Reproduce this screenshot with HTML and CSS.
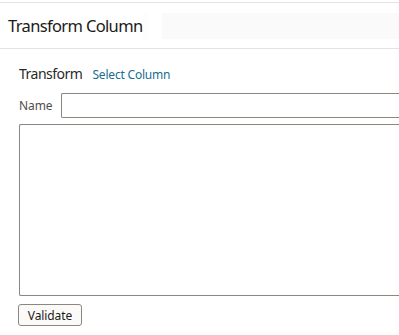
FILE: index.html
```html
<!DOCTYPE html>
<html>
<head>
<meta charset="utf-8">
<link rel="stylesheet" href="styles.css">
</head>
<body>
<div class="header">
  <h1 class="title">Transform Column</h1>
  <div class="gap"></div>
  <div class="search"></div>
</div>
<div class="content">
  <div class="section-head">
    <span class="section-title">Transform</span>
    <a class="link">Select Column</a>
  </div>
  <div class="field">
    <label class="label">Name</label>
    <div class="input"></div>
  </div>
  <div class="textarea"></div>
  <button class="btn">Validate</button>
</div>
</body>
</html>
```
FILE: styles.css
```css
html, body {
  margin: 0;
  padding: 0;
  background: #fff;
  font-family: "Noto Sans", "Open Sans", sans-serif;
  color: #161513;
  overflow: hidden;
}
.header {
  margin-top: 2px;
  border-top: 1px solid #e1e6e4;
  border-bottom: 1px solid #e3e3e1;
  height: 45px;
  display: flex;
  align-items: center;
}
.title {
  margin: 0 0 0 8px;
  width: 135px;
  font-size: 16.5px;
  letter-spacing: -0.65px;
  font-weight: 400;
  line-height: 22px;
  color: #1b1a18;
  white-space: nowrap;
}
.gap {
  width: 5px;
  height: 26px;
  background: #fdfdfd;
}
.search {
  margin-left: 14px;
  flex: 1;
  height: 26px;
  background: #fafafa;
  margin-top: 1px;
}
.content {
  padding: 15px 0 0 19px;
}
.section-head {
  display: flex;
  align-items: baseline;
  height: 20px;
}
.section-title {
  font-size: 14px;
  letter-spacing: -0.5px;
  color: #2b2a28;
}
.link {
  margin-left: 10px;
  font-size: 12px;
  letter-spacing: -0.2px;
  color: #156f91;
}
.field {
  display: flex;
  align-items: center;
  margin-top: 9px;
}
.label {
  font-size: 12px;
  letter-spacing: -0.1px;
  color: #4f4e4c;
  width: 42px;
}
.input {
  flex: 1;
  height: 23px;
  border: 1px solid #8a8680;
  border-right: none;
  border-radius: 2px 0 0 2px;
}
.textarea {
  margin-top: 6px;
  height: 170px;
  border: 1px solid #8a8680;
  border-right: none;
  border-radius: 2px 0 0 2px;
}
.btn {
  display: block;
  margin: 8px 0 0 -1px;
  width: 64px;
  height: 22px;
  padding: 0;
  border: 1px solid #8a8680;
  border-radius: 3px;
  background: #fbfaf8;
  font-family: "Noto Sans", "Open Sans", sans-serif;
  font-size: 12px;
  letter-spacing: -0.1px;
  color: #1b1a18;
}
```
